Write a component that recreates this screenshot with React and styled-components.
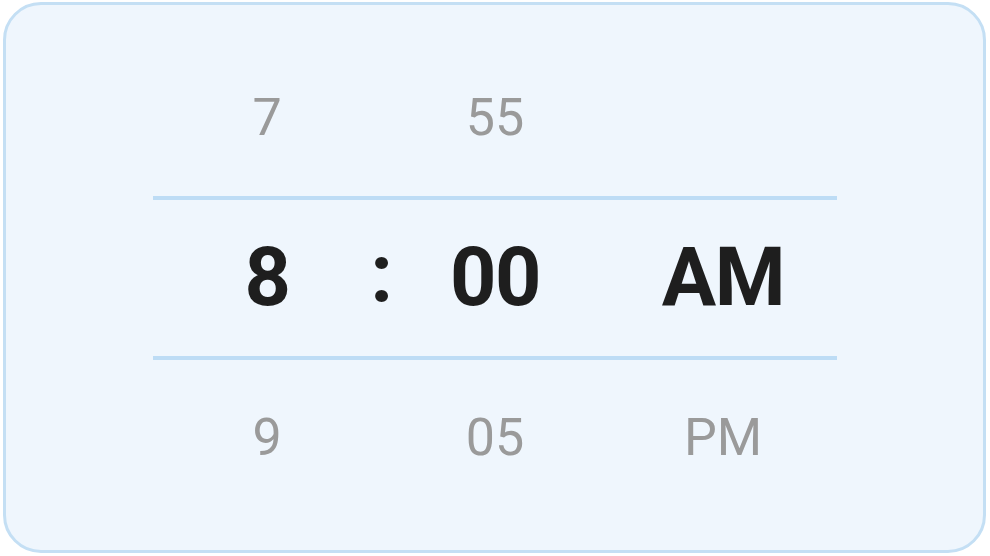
import styled, { createGlobalStyle } from "styled-components";

const Global = createGlobalStyle`
body {
  margin: 0;
  background: #ffffff;
  font-family: Roboto, "Liberation Sans", sans-serif;
}
`

const rows = [
    { hour: "7", minute: "55", period: "" },
    { hour: "8", minute: "00", period: "AM", active: true },
    { hour: "9", minute: "05", period: "PM" },
]

const App = () => {
    return (
        <Page>
            <Global />
            <Card>
                <Wheel>
                    {rows.map((row, i) => (
                        <div key={i}>
                            {i > 0 && <Divider />}
                            <Row $active={row.active}>
                                <Cell>{row.hour}</Cell>
                                <Sep>{row.active ? ":" : ""}</Sep>
                                <Cell>{row.minute}</Cell>
                                <Cell>{row.period}</Cell>
                            </Row>
                        </div>
                    ))}
                </Wheel>
            </Card>
        </Page>
    )
}

const Page = styled.div`
padding: 2px 4px 3px 3px;
`

const Card = styled.div`
box-sizing: border-box;
width: 983px;
height: 551px;
background-color: #eff6fd;
border: 3px solid #c4dff4;
border-radius: 38px;
display: flex;
justify-content: center;
align-items: center;
`

const Wheel = styled.div`
width: 684px;
display: flex;
flex-direction: column;
margin-top: 0;
margin-left: 1px;
`

const Divider = styled.div`
height: 4px;
background-color: #bddcf5;
`

const Row = styled.div`
height: 156px;
display: grid;
grid-template-columns: 1fr 0 1fr 1fr;
align-items: center;
color: ${p => p.$active ? "#1e1e1e" : "#9a9a9a"};
font-size: ${p => p.$active ? "81px" : "52px"};
font-weight: ${p => p.$active ? 700 : 400};
letter-spacing: ${p => p.$active ? "-1.5px" : "0"};
`

const Cell = styled.div`
text-align: center;
line-height: 1;
`

const Sep = styled.div`
display: flex;
justify-content: center;
line-height: 1;
margin-top: -6px;
`

export default App;
